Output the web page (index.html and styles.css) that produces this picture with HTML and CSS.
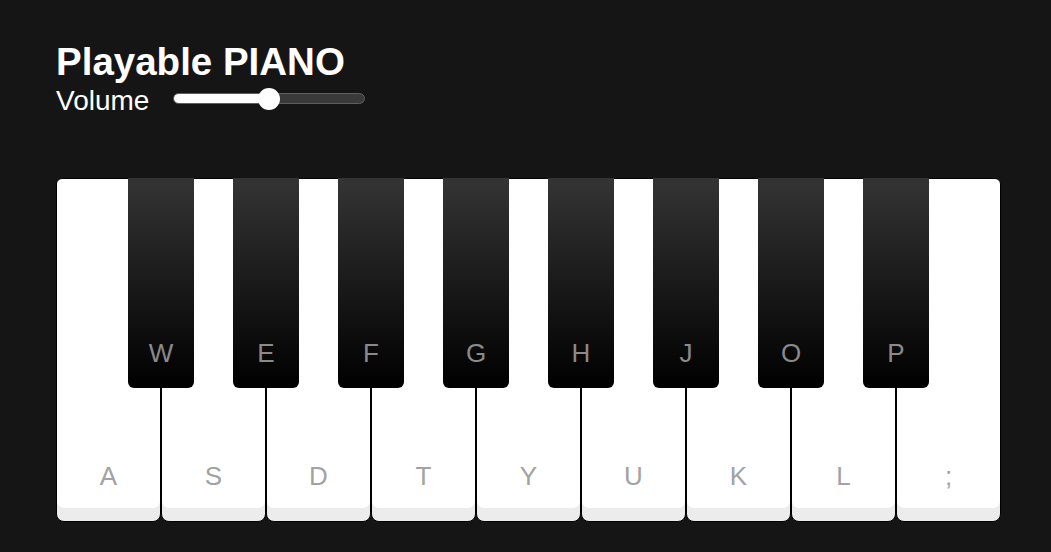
FILE: index.html
```html
<!DOCTYPE html>
<html lang="en">
<head>
<meta charset="utf-8">
<title>Playable PIANO</title>
<link rel="stylesheet" href="styles.css">
</head>
<body>
<main class="app">
  <header class="header">
    <h1 class="title">Playable PIANO</h1>
    <div class="volume">
      <span class="volume-label">Volume</span>
      <div class="slider" role="slider" aria-valuemin="0" aria-valuemax="100" aria-valuenow="50">
        <div class="slider-fill" style="width: 50%"></div>
        <div class="slider-thumb" style="left: 50%"></div>
      </div>
    </div>
  </header>
  <section class="piano">
    <div class="white-keys">
      <div class="white-key first"><span class="label">A</span></div>
      <div class="white-key"><span class="label">S</span></div>
      <div class="white-key"><span class="label">D</span></div>
      <div class="white-key"><span class="label">T</span></div>
      <div class="white-key"><span class="label">Y</span></div>
      <div class="white-key"><span class="label">U</span></div>
      <div class="white-key"><span class="label">K</span></div>
      <div class="white-key"><span class="label">L</span></div>
      <div class="white-key last"><span class="label">;</span></div>
    </div>
    <div class="black-key k1"><span class="label">W</span></div>
    <div class="black-key k2"><span class="label">E</span></div>
    <div class="black-key k3"><span class="label">F</span></div>
    <div class="black-key k4"><span class="label">G</span></div>
    <div class="black-key k5"><span class="label">H</span></div>
    <div class="black-key k6"><span class="label">J</span></div>
    <div class="black-key k7"><span class="label">O</span></div>
    <div class="black-key k8"><span class="label">P</span></div>
  </section>
</main>
</body>
</html>
```

FILE: styles.css
```css
html, body {
  margin: 0;
  padding: 0;
  background: #151515;
  height: 100%;
}

body {
  font-family: "Liberation Sans", Arial, sans-serif;
  color: #fff;
}

.app {
  padding: 40px 50px 0 56px;
}

.header {
  padding-left: 0;
}

.title {
  margin: 0;
  font-size: 38.5px;
  line-height: 44px;
  font-weight: bold;
}

.volume {
  display: flex;
  align-items: center;
  gap: 24px;
  margin-top: 1px;
  height: 32px;
}

.volume-label {
  font-size: 28px;
  line-height: 32px;
}

.slider {
  position: relative;
  width: 190px;
  height: 9px;
  border: 1px solid #5e5e5e;
  border-radius: 6px;
  background: #3a3a3a;
  margin-bottom: 5px;
}

.slider-fill {
  height: 100%;
  background: #fff;
  border-radius: 6px 0 0 6px;
}

.slider-thumb {
  position: absolute;
  top: 50%;
  width: 22px;
  height: 22px;
  margin: -11px 0 0 -11px;
  border-radius: 50%;
  background: #fff;
}

.piano {
  position: relative;
  margin-top: 61px;
  width: 945px;
}

.white-keys {
  display: flex;
}

.white-key {
  box-sizing: border-box;
  width: 105px;
  height: 344px;
  border: 1px solid #000;
  border-radius: 0 0 8px 8px;
  background: #fff;
  box-shadow: inset 0 -13px 0 #ececec;
  display: flex;
  align-items: flex-end;
  justify-content: center;
  padding-bottom: 30px;
}

.white-key.first {
  border-top-left-radius: 6px;
}

.white-key.last {
  border-top-right-radius: 6px;
}

.white-key .label {
  font-size: 26px;
  line-height: 30px;
  color: #a2a2a2;
}

.black-key {
  position: absolute;
  top: 0;
  width: 66px;
  height: 210px;
  border-radius: 0 0 6px 6px;
  background: linear-gradient(to bottom, #343434, #000);
  display: flex;
  align-items: flex-end;
  justify-content: center;
  box-sizing: border-box;
  padding-bottom: 20px;
}

.black-key .label {
  font-size: 26px;
  line-height: 30px;
  color: #8a8a8a;
}

.k1 { left: 72px; }
.k2 { left: 177px; }
.k3 { left: 282px; }
.k4 { left: 387px; }
.k5 { left: 492px; }
.k6 { left: 597px; }
.k7 { left: 702px; }
.k8 { left: 807px; }
```
